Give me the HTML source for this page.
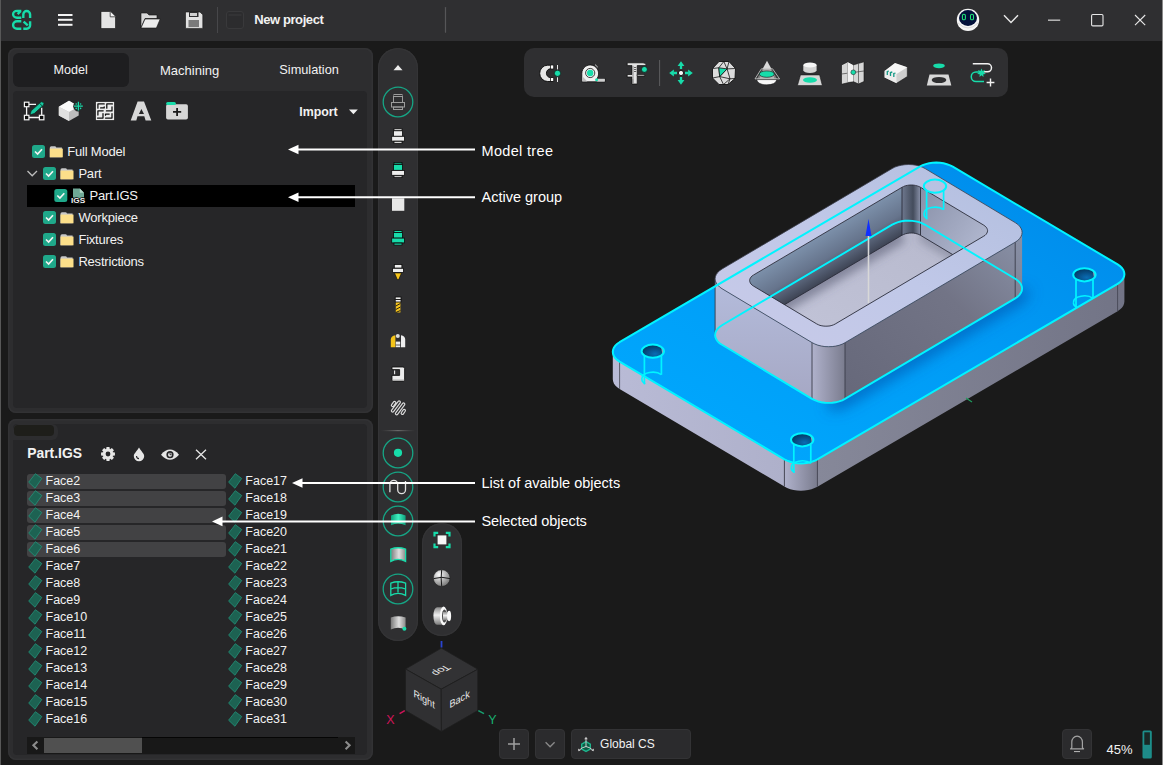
<!DOCTYPE html>
<html><head><meta charset="utf-8"><style>
*{margin:0;padding:0;box-sizing:border-box}
html,body{width:1163px;height:765px;overflow:hidden;background:#1a1a1a;font-family:"Liberation Sans", sans-serif;color:#f2f2f2}
.a{position:absolute}
.t{position:absolute;white-space:nowrap;line-height:1}
</style></head><body>

<div class="a" style="left:0;top:0;width:1163px;height:41px;background:#2f2f31"></div>
<div class="a" style="left:0;top:0;width:1px;height:765px;background:#585858"></div>
<div class="a" style="left:1162px;top:0;width:1px;height:765px;background:#8a8a8a"></div>
<div class="a" style="left:8px;top:48px;width:364.5px;height:365px;background:#2d2d2f;border-radius:8px;box-shadow:inset 0 0 0 1.5px #323234"></div>
<div class="a" style="left:13px;top:53px;width:116px;height:34px;background:#1e1e20;border-radius:6px"></div>
<div class="a" style="left:13px;top:91px;width:354px;height:317px;background:#262628;border-radius:4px"></div>
<div class="a" style="left:8px;top:419px;width:364.5px;height:341px;background:#2d2d2f;border-radius:8px;box-shadow:inset 0 0 0 1.5px #323234"></div>
<div class="a" style="left:13px;top:424px;width:354px;height:331px;background:#262628;border-radius:4px"></div>
<div class="a" style="left:13px;top:424px;width:45px;height:16px;background:#2d2d2f;border-radius:6px 6px 6px 0"></div>
<div class="a" style="left:14px;top:425px;width:40px;height:11px;background:#1e1e1a;border-radius:4px"></div>
<div class="a" style="left:377.5px;top:47.5px;width:40.5px;height:593px;background:#2f2f31;border-radius:20px;box-shadow:inset 0 0 0 1.2px #343436"></div>
<div class="a" style="left:422px;top:523px;width:39.5px;height:112.5px;background:#2f2f31;border-radius:20px;box-shadow:inset 0 0 0 1.2px #343436"></div>
<div class="a" style="left:524px;top:48px;width:484px;height:49px;background:#2f2f31;border-radius:10px"></div>
<div class="a" style="left:499px;top:729px;width:30px;height:30px;background:#2b2b2d;border:1px solid #333335;border-radius:4px"></div>
<div class="a" style="left:535px;top:729px;width:30px;height:30px;background:#2b2b2d;border:1px solid #333335;border-radius:4px"></div>
<div class="a" style="left:571px;top:729px;width:120px;height:30px;background:#2b2b2d;border:1px solid #333335;border-radius:4px"></div>
<div class="a" style="left:1062px;top:729px;width:30px;height:30px;background:#2b2b2d;border:1px solid #333335;border-radius:4px"></div>
<div class="a" style="left:27px;top:185px;width:328px;height:22px;background:#000"></div>
<div class="a" style="left:27px;top:474px;width:199px;height:15px;background:#424244;border-radius:3px"></div>
<div class="a" style="left:27px;top:491px;width:199px;height:15px;background:#424244;border-radius:3px"></div>
<div class="a" style="left:27px;top:508px;width:199px;height:15px;background:#424244;border-radius:3px"></div>
<div class="a" style="left:27px;top:525px;width:199px;height:15px;background:#424244;border-radius:3px"></div>
<div class="a" style="left:27px;top:542px;width:199px;height:15px;background:#424244;border-radius:3px"></div>
<div class="a" style="left:27px;top:737px;width:328px;height:17px;background:#181818"></div>
<div class="a" style="left:44px;top:738px;width:98px;height:14.5px;background:#505050"></div>
<svg class="a" style="left:0;top:0" width="1163" height="765" viewBox="0 0 1163 765">
<defs>
<linearGradient id="gTop" x1="0" y1="1" x2="1" y2="0">
<stop offset="0" stop-color="#00aaff"/><stop offset="0.5" stop-color="#009cf6"/><stop offset="1" stop-color="#0088e8"/></linearGradient>
<linearGradient id="gSideL" x1="0" y1="0" x2="1" y2="0">
<stop offset="0" stop-color="#b9bbd6"/><stop offset="1" stop-color="#aeb0ca"/></linearGradient>
<linearGradient id="gSideR" x1="0" y1="0" x2="1" y2="0">
<stop offset="0" stop-color="#868899"/><stop offset="1" stop-color="#727486"/></linearGradient>
<linearGradient id="gCorner" x1="0" y1="0" x2="1" y2="0">
<stop offset="0" stop-color="#b0b2cc"/><stop offset="1" stop-color="#7a7c8e"/></linearGradient>
<linearGradient id="gBossTop" x1="0" y1="1" x2="1" y2="0">
<stop offset="0" stop-color="#c8cae8"/><stop offset="0.5" stop-color="#c0c8e8"/><stop offset="1" stop-color="#b2bede"/></linearGradient>
<linearGradient id="gBossL" x1="0" y1="0" x2="0" y2="1">
<stop offset="0" stop-color="#b4bcdc"/><stop offset="1" stop-color="#a6a8c4"/></linearGradient>
<linearGradient id="gBossR" x1="0" y1="1" x2="1" y2="0">
<stop offset="0" stop-color="#66687a"/><stop offset="0.6" stop-color="#727486"/><stop offset="1" stop-color="#8a92a8"/></linearGradient>
<linearGradient id="gWallL" x1="0" y1="1" x2="1" y2="0">
<stop offset="0" stop-color="#5c6478"/><stop offset="1" stop-color="#7a8aa4"/></linearGradient>
<linearGradient id="gWallR" x1="0" y1="0" x2="1" y2="1">
<stop offset="0" stop-color="#8890a8"/><stop offset="1" stop-color="#bcc2da"/></linearGradient>
<linearGradient id="gFillet" x1="0" y1="0" x2="1" y2="0">
<stop offset="0" stop-color="#6e788e"/><stop offset="0.6" stop-color="#444c5c"/><stop offset="1" stop-color="#8a92aa"/></linearGradient>
<linearGradient id="gFloor" x1="0" y1="1" x2="1" y2="0">
<stop offset="0" stop-color="#c2c4d8"/><stop offset="1" stop-color="#b4b6ca"/></linearGradient>
<radialGradient id="gHole" cx="0.6" cy="0.7" r="0.8">
<stop offset="0" stop-color="#0a6cb4"/><stop offset="1" stop-color="#022c50"/></radialGradient>
<linearGradient id="gShadow" x1="0" y1="0" x2="1" y2="0">
<stop offset="0" stop-color="#0066c0" stop-opacity="0.55"/><stop offset="1" stop-color="#0066c0" stop-opacity="0"/></linearGradient>
</defs>
<path d="M612.8,351.8 L613.1,354.0 L613.9,356.1 L615.3,358.1 L617.2,359.9 L619.6,361.6 L784.4,459.3 L784.4,486.6 L619.6,388.9 L617.2,387.3 L615.3,385.4 L613.9,383.4 L613.1,381.3 L612.8,379.2Z" fill="url(#gSideL)"/>
<path d="M784.4,459.3 L787.1,460.7 L790.3,461.8 L793.6,462.7 L797.2,463.2 L800.9,463.4 L804.5,463.2 L808.1,462.7 L811.5,461.9 L814.6,460.8 L817.4,459.4 L817.4,486.8 L814.6,488.1 L811.5,489.3 L808.1,490.1 L804.5,490.6 L800.9,490.7 L797.2,490.5 L793.6,490.0 L790.3,489.2 L787.1,488.1 L784.4,486.6Z" fill="url(#gCorner)"/>
<path d="M817.4,459.4 L1117.6,283.8 L1119.9,282.2 L1121.9,280.4 L1123.3,278.4 L1124.1,276.3 L1124.4,274.2 L1124.4,301.5 L1124.1,303.6 L1123.3,305.7 L1121.9,307.7 L1119.9,309.6 L1117.6,311.2 L817.4,486.8Z" fill="url(#gSideR)"/>
<line x1="784.4" y1="459.3" x2="784.4" y2="486.6" stroke="#4a4c5a" stroke-width="1"/>
<line x1="817.4" y1="459.4" x2="817.4" y2="486.8" stroke="#4a4c5a" stroke-width="1"/>
<line x1="619.6" y1="361.6" x2="619.6" y2="388.9" stroke="#5a5c6a" stroke-width="1"/>
<line x1="1117.6" y1="283.8" x2="1117.6" y2="311.2" stroke="#4a4c5a" stroke-width="1"/>
<path d="M619.6,342.2 L617.3,343.8 L615.3,345.6 L613.9,347.6 L613.1,349.7 L612.8,351.8 L613.1,354.0 L613.9,356.1 L615.3,358.1 L617.2,359.9 L619.6,361.6 L784.4,459.3 L787.1,460.7 L790.3,461.8 L793.6,462.7 L797.2,463.2 L800.9,463.4 L804.5,463.2 L808.1,462.7 L811.5,461.9 L814.6,460.8 L817.4,459.4 L1117.6,283.8 L1119.9,282.2 L1121.9,280.4 L1123.3,278.4 L1124.1,276.3 L1124.4,274.2 L1124.1,272.0 L1123.3,269.9 L1121.9,267.9 L1120.0,266.1 L1117.6,264.4 L952.8,166.7 L950.1,165.3 L946.9,164.2 L943.6,163.3 L940.0,162.8 L936.3,162.6 L932.7,162.8 L929.1,163.3 L925.7,164.1 L922.6,165.2 L919.8,166.6Z" fill="url(#gTop)"/>
<filter id="fBlur" x="-20%" y="-20%" width="140%" height="140%"><feGaussianBlur stdDeviation="7"/></filter>
<clipPath id="cPlate"><path d="M619.6,342.2 L617.3,343.8 L615.3,345.6 L613.9,347.6 L613.1,349.7 L612.8,351.8 L613.1,354.0 L613.9,356.1 L615.3,358.1 L617.2,359.9 L619.6,361.6 L784.4,459.3 L787.1,460.7 L790.3,461.8 L793.6,462.7 L797.2,463.2 L800.9,463.4 L804.5,463.2 L808.1,462.7 L811.5,461.9 L814.6,460.8 L817.4,459.4 L1117.6,283.8 L1119.9,282.2 L1121.9,280.4 L1123.3,278.4 L1124.1,276.3 L1124.4,274.2 L1124.1,272.0 L1123.3,269.9 L1121.9,267.9 L1120.0,266.1 L1117.6,264.4 L952.8,166.7 L950.1,165.3 L946.9,164.2 L943.6,163.3 L940.0,162.8 L936.3,162.6 L932.7,162.8 L929.1,163.3 L925.7,164.1 L922.6,165.2 L919.8,166.6Z"/></clipPath>
<g clip-path="url(#cPlate)"><path d="M828.5,402.9 L832.2,402.8 L835.7,402.3 L839.1,401.4 L842.3,400.3 L845.0,398.9 L1015.2,298.4 L1017.6,296.7 L1019.5,294.9 L1020.9,292.9 L1021.8,290.8 L1022.1,288.6" fill="none" stroke="#0050a8" stroke-width="16" stroke-opacity="0.6" filter="url(#fBlur)"/></g>
<path d="M715.1,278.8 L715.4,281.0 L716.3,283.1 L717.7,285.1 L719.6,287.0 L722.0,288.7 L812.0,342.6 L812.0,398.8 L722.0,344.8 L719.6,343.2 L717.7,341.3 L716.3,339.3 L715.4,337.2 L715.1,335.0Z" fill="url(#gBossL)"/>
<path d="M812.0,342.6 L814.8,344.0 L817.9,345.2 L821.3,346.0 L824.9,346.6 L828.5,346.7 L832.2,346.6 L835.7,346.1 L839.1,345.3 L842.3,344.1 L845.0,342.7 L845.0,398.9 L842.3,400.3 L839.1,401.4 L835.7,402.3 L832.2,402.8 L828.5,402.9 L824.9,402.7 L821.3,402.2 L817.9,401.4 L814.8,400.2 L812.0,398.8Z" fill="url(#gCorner)"/>
<path d="M845.0,342.7 L1015.2,242.2 L1017.6,240.6 L1019.5,238.7 L1020.9,236.7 L1021.8,234.6 L1022.1,232.4 L1022.1,288.6 L1021.8,290.8 L1020.9,292.9 L1019.5,294.9 L1017.6,296.7 L1015.2,298.4 L845.0,398.9Z" fill="url(#gBossR)"/>
<line x1="715.1" y1="278.8" x2="715.1" y2="335.0" stroke="#3a3c4a" stroke-width="0.9"/>
<line x1="812.0" y1="342.6" x2="812.0" y2="398.8" stroke="#3a3c4a" stroke-width="0.9"/>
<line x1="845.0" y1="342.7" x2="845.0" y2="398.9" stroke="#3a3c4a" stroke-width="0.9"/>
<line x1="1015.2" y1="242.2" x2="1015.2" y2="298.4" stroke="#3a3c4a" stroke-width="0.9"/>
<path d="M722.0,269.0 L719.6,270.7 L717.7,272.5 L716.3,274.5 L715.4,276.7 L715.1,278.8 L715.4,281.0 L716.3,283.1 L717.7,285.1 L719.6,287.0 L722.0,288.7 L812.0,342.6 L814.8,344.0 L817.9,345.2 L821.3,346.0 L824.9,346.6 L828.5,346.7 L832.2,346.6 L835.7,346.1 L839.1,345.3 L842.3,344.1 L845.0,342.7 L1015.2,242.2 L1017.6,240.6 L1019.5,238.7 L1020.9,236.7 L1021.8,234.6 L1022.1,232.4 L1021.8,230.2 L1020.9,228.1 L1019.5,226.1 L1017.6,224.2 L1015.2,222.6 L925.2,168.6 L922.4,167.2 L919.3,166.0 L915.9,165.2 L912.3,164.7 L908.7,164.5 L905.0,164.7 L901.5,165.2 L898.1,166.0 L894.9,167.1 L892.2,168.5Z" fill="url(#gBossTop)" stroke="#3a3c4a" stroke-width="0.8"/>
<filter id="fBlur2" x="-20%" y="-20%" width="140%" height="140%"><feGaussianBlur stdDeviation="5"/></filter>
<clipPath id="cPocket"><path d="M753.5,275.0 L752.1,275.9 L751.1,277.0 L750.3,278.1 L749.8,279.3 L749.6,280.5 L749.8,281.7 L750.3,282.9 L751.0,284.0 L752.1,285.1 L753.4,286.0 L816.7,323.9 L818.3,324.7 L820.0,325.4 L821.9,325.8 L823.9,326.1 L825.9,326.2 L828.0,326.1 L830.0,325.9 L831.9,325.4 L833.6,324.8 L835.2,324.0 L983.7,236.2 L985.1,235.3 L986.1,234.3 L986.9,233.1 L987.4,231.9 L987.6,230.7 L987.4,229.5 L986.9,228.3 L986.2,227.2 L985.1,226.2 L983.8,225.2 L920.5,187.3 L918.9,186.5 L917.2,185.9 L915.3,185.4 L913.3,185.1 L911.3,185.0 L909.2,185.1 L907.2,185.4 L905.3,185.8 L903.6,186.5 L902.0,187.3Z"/></clipPath>
<g clip-path="url(#cPocket)">
<path d="M753.5,275.0 L752.1,275.9 L751.1,277.0 L750.3,278.1 L749.8,279.3 L749.6,280.5 L749.8,281.7 L750.3,282.9 L751.0,284.0 L752.1,285.1 L753.4,286.0 L816.7,323.9 L818.3,324.7 L820.0,325.4 L821.9,325.8 L823.9,326.1 L825.9,326.2 L828.0,326.1 L830.0,325.9 L831.9,325.4 L833.6,324.8 L835.2,324.0 L983.7,236.2 L985.1,235.3 L986.1,234.3 L986.9,233.1 L987.4,231.9 L987.6,230.7 L987.4,229.5 L986.9,228.3 L986.2,227.2 L985.1,226.2 L983.8,225.2 L920.5,187.3 L918.9,186.5 L917.2,185.9 L915.3,185.4 L913.3,185.1 L911.3,185.0 L909.2,185.1 L907.2,185.4 L905.3,185.8 L903.6,186.5 L902.0,187.3Z" fill="url(#gFloor)"/>
<path d="M902.0,235.2 L753.5,323.0 L752.1,323.9 L751.1,325.0 L750.3,326.1 L749.8,327.3 L749.6,328.5" fill="none" stroke="#50546a" stroke-width="14" stroke-opacity="0.55" filter="url(#fBlur2)"/>
<path d="M987.6,278.7 L987.4,277.5 L986.9,276.3 L986.2,275.2 L985.1,274.1 L983.8,273.2 L920.5,235.3" fill="none" stroke="#50546a" stroke-width="10" stroke-opacity="0.4" filter="url(#fBlur2)"/>
<linearGradient id="gWallL2" gradientUnits="userSpaceOnUse" x1="827.7" y1="231.1" x2="848.7" y2="266.7"><stop offset="0" stop-color="#7c90aa"/><stop offset="0.55" stop-color="#66748c"/><stop offset="1" stop-color="#3e4454"/></linearGradient>
<path d="M987.6,230.7 L987.4,229.5 L986.9,228.3 L986.2,227.2 L985.1,226.2 L983.8,225.2 L920.5,187.3 L920.5,235.3 L983.8,273.2 L985.1,274.1 L986.2,275.2 L986.9,276.3 L987.4,277.5 L987.6,278.7Z" fill="url(#gWallR)"/>
<path d="M920.5,187.3 L918.9,186.5 L917.2,185.9 L915.3,185.4 L913.3,185.1 L911.3,185.0 L909.2,185.1 L907.2,185.4 L905.3,185.8 L903.6,186.5 L902.0,187.3 L902.0,235.2 L903.6,234.5 L905.3,233.8 L907.2,233.4 L909.2,233.1 L911.3,233.0 L913.3,233.1 L915.3,233.4 L917.2,233.9 L918.9,234.5 L920.5,235.3Z" fill="url(#gFillet)"/>
<path d="M902.0,187.3 L753.5,275.0 L752.1,275.9 L751.1,277.0 L750.3,278.1 L749.8,279.3 L749.6,280.5 L749.6,328.5 L749.8,327.3 L750.3,326.1 L751.1,325.0 L752.1,323.9 L753.5,323.0 L902.0,235.2Z" fill="url(#gWallL2)"/>
<line x1="920.5" y1="187.3" x2="920.5" y2="235.3" stroke="#2a2c3a" stroke-width="0.9"/>
<line x1="902.0" y1="187.3" x2="902.0" y2="235.2" stroke="#2a2c3a" stroke-width="0.9"/>
<path d="M987.6,278.7 L987.4,277.5 L986.9,276.3 L986.2,275.2 L985.1,274.1 L983.8,273.2 L920.5,235.3 L918.9,234.5 L917.2,233.9 L915.3,233.4 L913.3,233.1 L911.3,233.0 L909.2,233.1 L907.2,233.4 L905.3,233.8 L903.6,234.5 L902.0,235.2 L753.5,323.0 L752.1,323.9 L751.1,325.0 L750.3,326.1 L749.8,327.3 L749.6,328.5" fill="none" stroke="#2a2c3a" stroke-width="0.9"/>
</g>
<path d="M753.5,275.0 L752.1,275.9 L751.1,277.0 L750.3,278.1 L749.8,279.3 L749.6,280.5 L749.8,281.7 L750.3,282.9 L751.0,284.0 L752.1,285.1 L753.4,286.0 L816.7,323.9 L818.3,324.7 L820.0,325.4 L821.9,325.8 L823.9,326.1 L825.9,326.2 L828.0,326.1 L830.0,325.9 L831.9,325.4 L833.6,324.8 L835.2,324.0 L983.7,236.2 L985.1,235.3 L986.1,234.3 L986.9,233.1 L987.4,231.9 L987.6,230.7 L987.4,229.5 L986.9,228.3 L986.2,227.2 L985.1,226.2 L983.8,225.2 L920.5,187.3 L918.9,186.5 L917.2,185.9 L915.3,185.4 L913.3,185.1 L911.3,185.0 L909.2,185.1 L907.2,185.4 L905.3,185.8 L903.6,186.5 L902.0,187.3Z" fill="none" stroke="#2a2c3a" stroke-width="0.9"/>
<path d="M661.0,356.0 L662.8,354.6 L664.0,353.0 L664.4,351.2 L664.0,349.5 L662.8,347.8 L661.0,346.4 L658.6,345.3 L655.8,344.7 L652.9,344.4 L649.9,344.6 L647.1,345.3 L644.7,346.4 L642.9,347.8 L641.7,349.4 L641.3,351.2 L641.7,352.9 L642.9,354.6 L644.7,356.0 L647.1,357.1 L649.8,357.7 L652.8,358.0 L655.8,357.8 L658.6,357.1 L661.0,356.0Z" fill="url(#gHole)"/>
<path d="M661.1,346.7 A11.4,6.6 0 0 1 662.4,354.4 Z" fill="#9aa0b4"/>
<path d="M810.4,444.6 L812.2,443.2 L813.4,441.6 L813.8,439.8 L813.4,438.1 L812.2,436.4 L810.4,435.0 L808.0,433.9 L805.2,433.3 L802.3,433.0 L799.3,433.2 L796.5,433.9 L794.1,435.0 L792.3,436.4 L791.1,438.0 L790.7,439.8 L791.1,441.5 L792.3,443.2 L794.1,444.6 L796.5,445.6 L799.2,446.3 L802.2,446.6 L805.2,446.4 L808.0,445.7 L810.4,444.6Z" fill="url(#gHole)"/>
<path d="M810.5,435.3 A11.4,6.6 0 0 1 811.8,443.0 Z" fill="#9aa0b4"/>
<path d="M1092.5,279.6 L1094.3,278.2 L1095.5,276.6 L1095.9,274.8 L1095.5,273.1 L1094.3,271.4 L1092.5,270.0 L1090.1,268.9 L1087.4,268.3 L1084.4,268.0 L1081.4,268.2 L1078.6,268.9 L1076.2,270.0 L1074.4,271.4 L1073.2,273.0 L1072.8,274.8 L1073.2,276.5 L1074.4,278.2 L1076.2,279.6 L1078.6,280.7 L1081.4,281.3 L1084.3,281.6 L1087.3,281.4 L1090.1,280.7 L1092.5,279.6Z" fill="url(#gHole)"/>
<path d="M1092.7,270.3 A11.4,6.6 0 0 1 1094.0,278.0 Z" fill="#9aa0b4"/>
<path d="M619.6,342.2 L617.3,343.8 L615.3,345.6 L613.9,347.6 L613.1,349.7 L612.8,351.8 L613.1,354.0 L613.9,356.1 L615.3,358.1 L617.2,359.9 L619.6,361.6 L784.4,459.3 L787.1,460.7 L790.3,461.8 L793.6,462.7 L797.2,463.2 L800.9,463.4 L804.5,463.2 L808.1,462.7 L811.5,461.9 L814.6,460.8 L817.4,459.4 L1117.6,283.8 L1119.9,282.2 L1121.9,280.4 L1123.3,278.4 L1124.1,276.3 L1124.4,274.2 L1124.1,272.0 L1123.3,269.9 L1121.9,267.9 L1120.0,266.1 L1117.6,264.4 L952.8,166.7 L950.1,165.3 L946.9,164.2 L943.6,163.3 L940.0,162.8 L936.3,162.6 L932.7,162.8 L929.1,163.3 L925.7,164.1 L922.6,165.2 L919.8,166.6Z" fill="none" stroke="#00f4ff" stroke-width="2"/>
<path d="M722.0,325.2 L719.6,326.9 L717.7,328.7 L716.3,330.7 L715.4,332.8 L715.1,335.0 L715.4,337.2 L716.3,339.3 L717.7,341.3 L719.6,343.2 L722.0,344.8 L812.0,398.8 L814.8,400.2 L817.9,401.4 L821.3,402.2 L824.9,402.7 L828.5,402.9 L832.2,402.8 L835.7,402.3 L839.1,401.4 L842.3,400.3 L845.0,398.9 L1015.2,298.4 L1017.6,296.7 L1019.5,294.9 L1020.9,292.9 L1021.8,290.8 L1022.1,288.6 L1021.8,286.4 L1020.9,284.3 L1019.5,282.3 L1017.6,280.4 L1015.2,278.8 L925.2,224.8 L922.4,223.4 L919.3,222.2 L915.9,221.4 L912.3,220.9 L908.7,220.7 L905.0,220.8 L901.5,221.3 L898.1,222.2 L894.9,223.3 L892.2,224.7Z" fill="none" stroke="#00f4ff" stroke-width="1.9"/>
<ellipse cx="652.8" cy="351.2" rx="11.2" ry="6.6" fill="none" stroke="#00f4ff" stroke-width="2"/>
<path d="M644.4,355.8 V384.2 M661.4,355.8 V374.7" stroke="#00f4ff" stroke-width="1.7" fill="none"/>
<path d="M642.0,378.5 A10.8,6.2 0 0 1 661.4,374.7 M642.0,378.5 A10.8,6.2 0 0 0 645.2,383.8" stroke="#00f4ff" stroke-width="1.6" fill="none"/>
<ellipse cx="802.2" cy="439.8" rx="11.2" ry="6.6" fill="none" stroke="#00f4ff" stroke-width="2"/>
<path d="M793.8,444.4 V472.8 M810.8,444.4 V463.3" stroke="#00f4ff" stroke-width="1.7" fill="none"/>
<path d="M791.4,467.1 A10.8,6.2 0 0 1 810.8,463.3 M791.4,467.1 A10.8,6.2 0 0 0 794.6,472.4" stroke="#00f4ff" stroke-width="1.6" fill="none"/>
<ellipse cx="1084.4" cy="274.8" rx="11.2" ry="6.6" fill="none" stroke="#00f4ff" stroke-width="2"/>
<path d="M1076.0,279.4 V307.8 M1093.0,279.4 V298.3" stroke="#00f4ff" stroke-width="1.7" fill="none"/>
<path d="M1073.6,302.1 A10.8,6.2 0 0 1 1093.0,298.3 M1073.6,302.1 A10.8,6.2 0 0 0 1076.8,307.4" stroke="#00f4ff" stroke-width="1.6" fill="none"/>
<ellipse cx="935.0" cy="186.2" rx="11.2" ry="6.6" fill="none" stroke="#00f4ff" stroke-width="2"/>
<path d="M926.6,190.8 V219.2 M943.6,190.8 V209.7" stroke="#00f4ff" stroke-width="1.7" fill="none"/>
<path d="M924.2,213.5 A10.8,6.2 0 0 1 943.6,209.7 M924.2,213.5 A10.8,6.2 0 0 0 927.4,218.8" stroke="#00f4ff" stroke-width="1.6" fill="none"/>
<line x1="868.5" y1="236" x2="868.5" y2="303" stroke="#d8d8d8" stroke-width="1.6"/>
<path d="M868.5,219 L871.5,236 L865.5,236 Z" fill="#1030ff"/>
<line x1="966" y1="398" x2="972" y2="402" stroke="#20a060" stroke-width="1.2"/>
</svg>
<div class="t" style="left:254.3px;top:13.20px;font-size:13px;font-weight:700;color:#f2f2f2;letter-spacing:-0.42px;">New project</div>
<div class="t" style="left:53.6px;top:64.03px;font-size:12.6px;font-weight:400;color:#f2f2f2;letter-spacing:0px;">Model</div>
<div class="t" style="left:160px;top:63.50px;font-size:13px;font-weight:400;color:#f2f2f2;letter-spacing:0px;">Machining</div>
<div class="t" style="left:279.3px;top:63.91px;font-size:12.75px;font-weight:400;color:#f2f2f2;letter-spacing:0px;">Simulation</div>
<div class="t" style="left:299.2px;top:106.10px;font-size:12.4px;font-weight:700;color:#f2f2f2;letter-spacing:0px;">Import</div>
<div class="t" style="left:67.2px;top:145.00px;font-size:13px;font-weight:400;color:#f2f2f2;letter-spacing:-0.2px;">Full Model</div>
<div class="t" style="left:78.4px;top:167.00px;font-size:13px;font-weight:400;color:#f2f2f2;letter-spacing:-0.2px;">Part</div>
<div class="t" style="left:89.6px;top:189.00px;font-size:13px;font-weight:400;color:#f2f2f2;letter-spacing:-0.2px;">Part.IGS</div>
<div class="t" style="left:78.4px;top:211.00px;font-size:13px;font-weight:400;color:#f2f2f2;letter-spacing:-0.2px;">Workpiece</div>
<div class="t" style="left:78.4px;top:233.00px;font-size:13px;font-weight:400;color:#f2f2f2;letter-spacing:-0.2px;">Fixtures</div>
<div class="t" style="left:78.4px;top:255.00px;font-size:13px;font-weight:400;color:#f2f2f2;letter-spacing:-0.2px;">Restrictions</div>
<div class="t" style="left:27.2px;top:447.23px;font-size:13.9px;font-weight:700;color:#f2f2f2;letter-spacing:0px;">Part.IGS</div>
<div class="t" style="left:45.5px;top:474.72px;font-size:12.5px;font-weight:400;color:#f2f2f2;letter-spacing:0px;">Face2</div>
<div class="t" style="left:245.3px;top:474.72px;font-size:12.5px;font-weight:400;color:#f2f2f2;letter-spacing:0px;">Face17</div>
<div class="t" style="left:45.5px;top:491.72px;font-size:12.5px;font-weight:400;color:#f2f2f2;letter-spacing:0px;">Face3</div>
<div class="t" style="left:245.3px;top:491.72px;font-size:12.5px;font-weight:400;color:#f2f2f2;letter-spacing:0px;">Face18</div>
<div class="t" style="left:45.5px;top:508.72px;font-size:12.5px;font-weight:400;color:#f2f2f2;letter-spacing:0px;">Face4</div>
<div class="t" style="left:245.3px;top:508.72px;font-size:12.5px;font-weight:400;color:#f2f2f2;letter-spacing:0px;">Face19</div>
<div class="t" style="left:45.5px;top:525.72px;font-size:12.5px;font-weight:400;color:#f2f2f2;letter-spacing:0px;">Face5</div>
<div class="t" style="left:245.3px;top:525.72px;font-size:12.5px;font-weight:400;color:#f2f2f2;letter-spacing:0px;">Face20</div>
<div class="t" style="left:45.5px;top:542.72px;font-size:12.5px;font-weight:400;color:#f2f2f2;letter-spacing:0px;">Face6</div>
<div class="t" style="left:245.3px;top:542.72px;font-size:12.5px;font-weight:400;color:#f2f2f2;letter-spacing:0px;">Face21</div>
<div class="t" style="left:45.5px;top:559.72px;font-size:12.5px;font-weight:400;color:#f2f2f2;letter-spacing:0px;">Face7</div>
<div class="t" style="left:245.3px;top:559.72px;font-size:12.5px;font-weight:400;color:#f2f2f2;letter-spacing:0px;">Face22</div>
<div class="t" style="left:45.5px;top:576.72px;font-size:12.5px;font-weight:400;color:#f2f2f2;letter-spacing:0px;">Face8</div>
<div class="t" style="left:245.3px;top:576.72px;font-size:12.5px;font-weight:400;color:#f2f2f2;letter-spacing:0px;">Face23</div>
<div class="t" style="left:45.5px;top:593.72px;font-size:12.5px;font-weight:400;color:#f2f2f2;letter-spacing:0px;">Face9</div>
<div class="t" style="left:245.3px;top:593.72px;font-size:12.5px;font-weight:400;color:#f2f2f2;letter-spacing:0px;">Face24</div>
<div class="t" style="left:45.5px;top:610.72px;font-size:12.5px;font-weight:400;color:#f2f2f2;letter-spacing:0px;">Face10</div>
<div class="t" style="left:245.3px;top:610.72px;font-size:12.5px;font-weight:400;color:#f2f2f2;letter-spacing:0px;">Face25</div>
<div class="t" style="left:45.5px;top:627.72px;font-size:12.5px;font-weight:400;color:#f2f2f2;letter-spacing:0px;">Face11</div>
<div class="t" style="left:245.3px;top:627.72px;font-size:12.5px;font-weight:400;color:#f2f2f2;letter-spacing:0px;">Face26</div>
<div class="t" style="left:45.5px;top:644.72px;font-size:12.5px;font-weight:400;color:#f2f2f2;letter-spacing:0px;">Face12</div>
<div class="t" style="left:245.3px;top:644.72px;font-size:12.5px;font-weight:400;color:#f2f2f2;letter-spacing:0px;">Face27</div>
<div class="t" style="left:45.5px;top:661.72px;font-size:12.5px;font-weight:400;color:#f2f2f2;letter-spacing:0px;">Face13</div>
<div class="t" style="left:245.3px;top:661.72px;font-size:12.5px;font-weight:400;color:#f2f2f2;letter-spacing:0px;">Face28</div>
<div class="t" style="left:45.5px;top:678.72px;font-size:12.5px;font-weight:400;color:#f2f2f2;letter-spacing:0px;">Face14</div>
<div class="t" style="left:245.3px;top:678.72px;font-size:12.5px;font-weight:400;color:#f2f2f2;letter-spacing:0px;">Face29</div>
<div class="t" style="left:45.5px;top:695.72px;font-size:12.5px;font-weight:400;color:#f2f2f2;letter-spacing:0px;">Face15</div>
<div class="t" style="left:245.3px;top:695.72px;font-size:12.5px;font-weight:400;color:#f2f2f2;letter-spacing:0px;">Face30</div>
<div class="t" style="left:45.5px;top:712.72px;font-size:12.5px;font-weight:400;color:#f2f2f2;letter-spacing:0px;">Face16</div>
<div class="t" style="left:245.3px;top:712.72px;font-size:12.5px;font-weight:400;color:#f2f2f2;letter-spacing:0px;">Face31</div>
<div class="t" style="left:600.1px;top:737.84px;font-size:12px;font-weight:400;color:#f2f2f2;letter-spacing:0px;">Global CS</div>
<div class="t" style="left:1106.6px;top:743.00px;font-size:13px;font-weight:400;color:#f2f2f2;letter-spacing:0px;">45%</div>
<div class="t" style="left:481.5px;top:143.93px;font-size:14.5px;font-weight:400;color:#ffffff;letter-spacing:0.33px;">Model tree</div>
<div class="t" style="left:481.5px;top:189.53px;font-size:14.5px;font-weight:400;color:#ffffff;letter-spacing:0px;">Active group</div>
<div class="t" style="left:481.5px;top:476.13px;font-size:14.5px;font-weight:400;color:#ffffff;letter-spacing:0px;">List of avaible objects</div>
<div class="t" style="left:481.5px;top:514.33px;font-size:14.5px;font-weight:400;color:#ffffff;letter-spacing:-0.07px;">Selected objects</div>
<svg class="a" style="left:0;top:0" width="1163" height="765" viewBox="0 0 1163 765">
<defs>
<linearGradient id="gGrayH" x1="0" y1="0" x2="1" y2="0"><stop offset="0" stop-color="#7a7a7a"/><stop offset="0.55" stop-color="#e0e0e0"/><stop offset="1" stop-color="#8a8a8a"/></linearGradient>
<linearGradient id="gTealH" x1="0" y1="0" x2="1" y2="0"><stop offset="0" stop-color="#0fa07c"/><stop offset="0.5" stop-color="#3ff0c0"/><stop offset="1" stop-color="#0fa07c"/></linearGradient>
<radialGradient id="gSphere" cx="0.35" cy="0.3" r="0.8"><stop offset="0" stop-color="#ffffff"/><stop offset="1" stop-color="#6a6a6a"/></radialGradient>
</defs>
<g fill="none" stroke="#17dcaa" stroke-width="2.4" transform="translate(0,-0.3)"><path d="M21.3,11.2 H17 A3.9,3.4 0 0 0 17,18 H21.3"/><path d="M20.6,11.4 L17.6,14.4"/><path d="M23.3,18.3 V14.8 A3.4,3.5 0 0 1 30.1,14.8 V18.3"/><path d="M21.3,21.6 H17 A3.9,3.7 0 0 0 17,29 H21.3"/><path d="M30.1,21.5 V25.5 A3.4,3.5 0 0 1 26.7,29 H23.3"/><path d="M23.6,21.9 L27.8,25.6"/></g>
<g fill="#f4f4f4"><rect x="58" y="14" width="14.5" height="2"/><rect x="58" y="18.8" width="14.5" height="2"/><rect x="58" y="23.8" width="14.5" height="2"/></g>
<path d="M101,11.5 H110.2 L115.5,16.8 V28.5 H101 Z" fill="#e4e4e4" stroke="#111" stroke-width="0.6"/>
<path d="M110.2,11.5 V16.8 H115.5" fill="#f4f4f4" stroke="#333" stroke-width="0.8"/>
<path d="M141,13 H147 L149,15 H157 V18.5 H145 L141,27.8 Z" fill="#d8d8d8" stroke="#111" stroke-width="0.6"/>
<path d="M145,19 H160.2 L156.4,28 H141 Z" fill="#ececec" stroke="#111" stroke-width="0.6"/>
<path d="M185.5,12 H200 L202.8,14.8 V28.4 H185.5 Z" fill="#e2e2e2" stroke="#111" stroke-width="0.6"/>
<rect x="189" y="12" width="9.5" height="5" fill="#2f2f31"/>
<rect x="190" y="13" width="7" height="3" fill="#d0d0d0"/>
<rect x="188.5" y="20" width="10.5" height="7" fill="#7a7a7a"/>
<rect x="217" y="7" width="1" height="26" fill="#47474a"/>
<rect x="444.9" y="7" width="1.2" height="25.8" rx="0.6" fill="#565658"/>
<rect x="226.5" y="11.5" width="17" height="17" rx="2.5" fill="#2c2c2e" stroke="#39393b" stroke-width="1"/>
<rect x="228.5" y="14.5" width="13" height="1" fill="#3a3a3c"/>
<circle cx="968" cy="19.9" r="11.2" fill="#f6f6f6"/>
<path d="M958,23 Q968,33 978,23" fill="none" stroke="#dadada" stroke-width="1"/>
<ellipse cx="968" cy="18" rx="9" ry="7.9" fill="#03113a"/>
<g fill="none" stroke="#22e47a" stroke-width="1.1"><rect x="962.4" y="14.3" width="3" height="5.5" rx="1.4"/><rect x="970.5" y="14.3" width="3" height="5.5" rx="1.4"/></g>
<path d="M1004,15.3 L1011,22.6 L1018,15.3" fill="none" stroke="#e8e8e8" stroke-width="1.4"/>
<rect x="1048" y="19.6" width="12.2" height="1.1" fill="#e8e8e8"/>
<rect x="1091.6" y="14.5" width="11.4" height="11.4" rx="1.2" fill="none" stroke="#e8e8e8" stroke-width="1.1"/>
<path d="M1135,15 L1145.2,25.2 M1145.2,15 L1135,25.2" stroke="#e8e8e8" stroke-width="1.1"/>
<path d="M29,104.4 H36 M26.6,106.8 V115.3 M41.7,107.7 V115.3 M29,117.5 H39.3" stroke="#f4f4f4" stroke-width="1.3" fill="none"/>
<g fill="#111" stroke="#f4f4f4" stroke-width="1.2"><rect x="24.4" y="102.2" width="4.5" height="4.5"/><rect x="24.4" y="115.3" width="4.5" height="4.5"/><rect x="39.4" y="115.3" width="4.5" height="4.5"/></g>
<path d="M30,114.8 L31.2,110.8 L40.3,102.6 A1.9,1.9 0 0 1 43.4,105.2 L34.2,113.6 Z" fill="#17c9a0" stroke="#0b2a22" stroke-width="0.7"/>
<path d="M39.6,103.4 L42.4,106.1" stroke="#0b2a22" stroke-width="0.8"/>
<path d="M58.8,106.8 L69,100.8 L78.7,106.5 V115.6 L69,121 L58.8,115.6 Z" fill="#bdbdbd"/>
<path d="M58.8,106.8 L69,100.8 L78.7,106.5 L69,112 Z" fill="#fafafa"/>
<path d="M58.8,106.8 L69,112 V121 L58.8,115.6 Z" fill="#e0e0e0"/>
<circle cx="78.4" cy="106.2" r="5.2" fill="#262628"/>
<path d="M78.4,101.8 V110.6 M74,106.2 H82.8" stroke="#17dcaa" stroke-width="1.3"/>
<g fill="#17dcaa"><circle cx="76.2" cy="104" r="0.8"/><circle cx="80.6" cy="104" r="0.8"/><circle cx="76.2" cy="108.4" r="0.8"/><circle cx="80.6" cy="108.4" r="0.8"/></g>
<rect x="95.9" y="101.9" width="18.2" height="18.2" fill="#ececec"/>
<g fill="none" stroke="#0c0c0c" stroke-width="1.25" stroke-linecap="round" stroke-linejoin="round"><path d="M104.2,103.9 H97.9 V108.2 M100.6,107.9 H104.2 V106.8"/><path d="M112.4,103.9 H106.8 V108.2 M112,106.8 V110.9 H106.4"/><path d="M103.2,110.8 H97.9 V115 M103,113.5 V118 H97.5"/><path d="M109.2,114 H105.5 V115.2 M112,113.5 V118 H105.5"/></g>
<path d="M130.7,120.5 L137.6,101.6 H144 L151.3,120.5 H145.6 L144.3,116.2 H137.5 L136.3,120.5 Z M138.9,114.1 L141.4,108.9 L144,114.1 Z" fill="#d8d8d8" fill-rule="evenodd"/>
<rect x="166.1" y="104.2" width="21.8" height="15.4" rx="1.8" fill="#d6d6d6"/>
<rect x="166.1" y="101.9" width="9.8" height="3.2" rx="1.6" fill="#17dcaa"/>
<path d="M177.1,107.9 V116 M173,111.9 H181.2" stroke="#1a1a1a" stroke-width="1.8"/>
<path d="M349,109.5 H357.8 L353.4,114.2 Z" fill="#f0f0f0"/>
<rect x="32" y="145" width="13" height="13" rx="2.5" fill="#1fa88a"/>
<path d="M35,151.5 L37.6,154 L42,149.2" fill="none" stroke="#f4f4f4" stroke-width="1.7"/>
<path d="M49.8,147.8 Q49.8,146.3 51.3,146.3 H54.8 Q55.8,146.3 56.3,147.5 H61.9 V157.3 H49.8 Z" fill="#c8c8c8"/>
<rect x="49.8" y="148.6" width="13" height="8.7" fill="#fcdf8a"/>
<rect x="43" y="167" width="13" height="13" rx="2.5" fill="#1fa88a"/>
<path d="M46,173.5 L48.6,176 L53,171.2" fill="none" stroke="#f4f4f4" stroke-width="1.7"/>
<path d="M60.5,169.8 Q60.5,168.3 62,168.3 H65.5 Q66.5,168.3 67,169.5 H72.6 V179.3 H60.5 Z" fill="#c8c8c8"/>
<rect x="60.5" y="170.6" width="13" height="8.7" fill="#fcdf8a"/>
<rect x="54.3" y="189" width="13" height="13" rx="2.5" fill="#1fa88a"/>
<path d="M57.3,195.5 L59.9,198 L64.3,193.2" fill="none" stroke="#f4f4f4" stroke-width="1.7"/>
<rect x="43" y="211" width="13" height="13" rx="2.5" fill="#1fa88a"/>
<path d="M46,217.5 L48.6,220 L53,215.2" fill="none" stroke="#f4f4f4" stroke-width="1.7"/>
<path d="M60.5,213.8 Q60.5,212.3 62,212.3 H65.5 Q66.5,212.3 67,213.5 H72.6 V223.3 H60.5 Z" fill="#c8c8c8"/>
<rect x="60.5" y="214.6" width="13" height="8.7" fill="#fcdf8a"/>
<rect x="43" y="233" width="13" height="13" rx="2.5" fill="#1fa88a"/>
<path d="M46,239.5 L48.6,242 L53,237.2" fill="none" stroke="#f4f4f4" stroke-width="1.7"/>
<path d="M60.5,235.8 Q60.5,234.3 62,234.3 H65.5 Q66.5,234.3 67,235.5 H72.6 V245.3 H60.5 Z" fill="#c8c8c8"/>
<rect x="60.5" y="236.6" width="13" height="8.7" fill="#fcdf8a"/>
<rect x="43" y="255" width="13" height="13" rx="2.5" fill="#1fa88a"/>
<path d="M46,261.5 L48.6,264 L53,259.2" fill="none" stroke="#f4f4f4" stroke-width="1.7"/>
<path d="M60.5,257.8 Q60.5,256.3 62,256.3 H65.5 Q66.5,256.3 67,257.5 H72.6 V267.3 H60.5 Z" fill="#c8c8c8"/>
<rect x="60.5" y="258.6" width="13" height="8.7" fill="#fcdf8a"/>
<path d="M27.5,171 L32.2,175.8 L37,171" fill="none" stroke="#bdbdbd" stroke-width="1.3"/>
<path d="M73,188.5 H79.8 L84,192.7 V203.2 H73 Z" fill="#6ea896"/>
<path d="M79.8,188.5 V192.7 H84 Z" fill="#b4d8c8"/>
<text x="71" y="202.6" font-family="Liberation Sans" font-size="7.8" font-weight="700" fill="#f0f0f0" stroke="#000" stroke-width="1.6" paint-order="stroke" textLength="14.2" lengthAdjust="spacingAndGlyphs">IGS</text>
<path d="M114.94,452.52 L114.94,455.48 L112.89,455.78 L112.71,456.20 L113.95,457.87 L111.87,459.95 L110.20,458.71 L109.78,458.89 L109.48,460.94 L106.52,460.94 L106.22,458.89 L105.80,458.71 L104.13,459.95 L102.05,457.87 L103.29,456.20 L103.11,455.78 L101.06,455.48 L101.06,452.52 L103.11,452.22 L103.29,451.80 L102.05,450.13 L104.13,448.05 L105.80,449.29 L106.22,449.11 L106.52,447.06 L109.48,447.06 L109.78,449.11 L110.20,449.29 L111.87,448.05 L113.95,450.13 L112.71,451.80 L112.89,452.22Z" fill="#e6e6e6"/><circle cx="108" cy="454" r="2.4" fill="#262628"/>
<path d="M139,447.5 C141,451 144.2,453.5 144.2,456 A5.2,5.2 0 0 1 133.8,456 C133.8,453.5 137,451 139,447.5 Z" fill="#e6e6e6"/>
<path d="M136.5,456 A2.6,2.6 0 0 0 139,458.6" stroke="#262628" stroke-width="1.1" fill="none"/>
<path d="M161,454.7 Q170,444.5 179,454.7 Q170,464.9 161,454.7 Z" fill="#e6e6e6"/>
<circle cx="170" cy="454.7" r="3.6" fill="#262628"/><circle cx="170" cy="454.7" r="2" fill="#e6e6e6"/>
<path d="M170,452.8 V454.7 H171.6" stroke="#262628" stroke-width="0.9" fill="none"/>
<path d="M196,449.8 L206,459.2 M206,449.8 L196,459.2" stroke="#e6e6e6" stroke-width="1.3"/>
<path d="M35.4,473.7 L41.8,478.5 L35.0,488.2 L28.7,482.2 Z" fill="#1d6252" stroke="#22937a" stroke-width="0.8"/>
<path d="M35.4,490.7 L41.8,495.5 L35.0,505.2 L28.7,499.2 Z" fill="#1d6252" stroke="#22937a" stroke-width="0.8"/>
<path d="M35.4,507.7 L41.8,512.5 L35.0,522.2 L28.7,516.2 Z" fill="#1d6252" stroke="#22937a" stroke-width="0.8"/>
<path d="M35.4,524.6999999999999 L41.8,529.5 L35.0,539.1999999999999 L28.7,533.1999999999999 Z" fill="#1d6252" stroke="#22937a" stroke-width="0.8"/>
<path d="M35.4,541.6999999999999 L41.8,546.5 L35.0,556.1999999999999 L28.7,550.1999999999999 Z" fill="#1d6252" stroke="#22937a" stroke-width="0.8"/>
<path d="M35.4,558.6999999999999 L41.8,563.5 L35.0,573.1999999999999 L28.7,567.1999999999999 Z" fill="#1d6252" stroke="#22937a" stroke-width="0.8"/>
<path d="M35.4,575.6999999999999 L41.8,580.5 L35.0,590.1999999999999 L28.7,584.1999999999999 Z" fill="#1d6252" stroke="#22937a" stroke-width="0.8"/>
<path d="M35.4,592.6999999999999 L41.8,597.5 L35.0,607.1999999999999 L28.7,601.1999999999999 Z" fill="#1d6252" stroke="#22937a" stroke-width="0.8"/>
<path d="M35.4,609.6999999999999 L41.8,614.5 L35.0,624.1999999999999 L28.7,618.1999999999999 Z" fill="#1d6252" stroke="#22937a" stroke-width="0.8"/>
<path d="M35.4,626.6999999999999 L41.8,631.5 L35.0,641.1999999999999 L28.7,635.1999999999999 Z" fill="#1d6252" stroke="#22937a" stroke-width="0.8"/>
<path d="M35.4,643.6999999999999 L41.8,648.5 L35.0,658.1999999999999 L28.7,652.1999999999999 Z" fill="#1d6252" stroke="#22937a" stroke-width="0.8"/>
<path d="M35.4,660.6999999999999 L41.8,665.5 L35.0,675.1999999999999 L28.7,669.1999999999999 Z" fill="#1d6252" stroke="#22937a" stroke-width="0.8"/>
<path d="M35.4,677.6999999999999 L41.8,682.5 L35.0,692.1999999999999 L28.7,686.1999999999999 Z" fill="#1d6252" stroke="#22937a" stroke-width="0.8"/>
<path d="M35.4,694.6999999999999 L41.8,699.5 L35.0,709.1999999999999 L28.7,703.1999999999999 Z" fill="#1d6252" stroke="#22937a" stroke-width="0.8"/>
<path d="M35.4,711.6999999999999 L41.8,716.5 L35.0,726.1999999999999 L28.7,720.1999999999999 Z" fill="#1d6252" stroke="#22937a" stroke-width="0.8"/>
<path d="M235.29999999999998,473.7 L241.7,478.5 L234.89999999999998,488.2 L228.6,482.2 Z" fill="#1d6252" stroke="#22937a" stroke-width="0.8"/>
<path d="M235.29999999999998,490.7 L241.7,495.5 L234.89999999999998,505.2 L228.6,499.2 Z" fill="#1d6252" stroke="#22937a" stroke-width="0.8"/>
<path d="M235.29999999999998,507.7 L241.7,512.5 L234.89999999999998,522.2 L228.6,516.2 Z" fill="#1d6252" stroke="#22937a" stroke-width="0.8"/>
<path d="M235.29999999999998,524.6999999999999 L241.7,529.5 L234.89999999999998,539.1999999999999 L228.6,533.1999999999999 Z" fill="#1d6252" stroke="#22937a" stroke-width="0.8"/>
<path d="M235.29999999999998,541.6999999999999 L241.7,546.5 L234.89999999999998,556.1999999999999 L228.6,550.1999999999999 Z" fill="#1d6252" stroke="#22937a" stroke-width="0.8"/>
<path d="M235.29999999999998,558.6999999999999 L241.7,563.5 L234.89999999999998,573.1999999999999 L228.6,567.1999999999999 Z" fill="#1d6252" stroke="#22937a" stroke-width="0.8"/>
<path d="M235.29999999999998,575.6999999999999 L241.7,580.5 L234.89999999999998,590.1999999999999 L228.6,584.1999999999999 Z" fill="#1d6252" stroke="#22937a" stroke-width="0.8"/>
<path d="M235.29999999999998,592.6999999999999 L241.7,597.5 L234.89999999999998,607.1999999999999 L228.6,601.1999999999999 Z" fill="#1d6252" stroke="#22937a" stroke-width="0.8"/>
<path d="M235.29999999999998,609.6999999999999 L241.7,614.5 L234.89999999999998,624.1999999999999 L228.6,618.1999999999999 Z" fill="#1d6252" stroke="#22937a" stroke-width="0.8"/>
<path d="M235.29999999999998,626.6999999999999 L241.7,631.5 L234.89999999999998,641.1999999999999 L228.6,635.1999999999999 Z" fill="#1d6252" stroke="#22937a" stroke-width="0.8"/>
<path d="M235.29999999999998,643.6999999999999 L241.7,648.5 L234.89999999999998,658.1999999999999 L228.6,652.1999999999999 Z" fill="#1d6252" stroke="#22937a" stroke-width="0.8"/>
<path d="M235.29999999999998,660.6999999999999 L241.7,665.5 L234.89999999999998,675.1999999999999 L228.6,669.1999999999999 Z" fill="#1d6252" stroke="#22937a" stroke-width="0.8"/>
<path d="M235.29999999999998,677.6999999999999 L241.7,682.5 L234.89999999999998,692.1999999999999 L228.6,686.1999999999999 Z" fill="#1d6252" stroke="#22937a" stroke-width="0.8"/>
<path d="M235.29999999999998,694.6999999999999 L241.7,699.5 L234.89999999999998,709.1999999999999 L228.6,703.1999999999999 Z" fill="#1d6252" stroke="#22937a" stroke-width="0.8"/>
<path d="M235.29999999999998,711.6999999999999 L241.7,716.5 L234.89999999999998,726.1999999999999 L228.6,720.1999999999999 Z" fill="#1d6252" stroke="#22937a" stroke-width="0.8"/>
<path d="M37.4,741.4 L33.4,745.3 L37.4,749.2" fill="none" stroke="#8c8c8c" stroke-width="2.1"/>
<path d="M345.6,741.4 L349.6,745.3 L345.6,749.2" fill="none" stroke="#8c8c8c" stroke-width="2.1"/>
<rect x="142" y="737" width="196" height="1" fill="#050505"/>
<path d="M393.5,70.3 L398,64.9 L402.5,70.3 Z" fill="#ececec"/>
<circle cx="398" cy="102" r="14.8" fill="none" stroke="#16a585" stroke-width="1.3"/>
<circle cx="398" cy="453" r="14.8" fill="none" stroke="#16a585" stroke-width="1.3"/>
<circle cx="398" cy="487" r="14.8" fill="none" stroke="#16a585" stroke-width="1.3"/>
<circle cx="398" cy="521" r="14.8" fill="none" stroke="#16a585" stroke-width="1.3"/>
<circle cx="398" cy="589" r="14.8" fill="none" stroke="#16a585" stroke-width="1.3"/>
<g fill="none" stroke="#9c9c9c" stroke-width="1"><rect x="394" y="94.5" width="8" height="2"/><rect x="393.5" y="96.5" width="9" height="6"/><rect x="391.5" y="102.5" width="13" height="4.5"/><rect x="393.5" y="107" width="9" height="2.5"/></g>
<g stroke="#0a0a0a" stroke-width="0.8"><rect x="394" y="128.8" width="8" height="2" fill="#eeeeee"/><rect x="393.5" y="130.8" width="9" height="5.5" fill="#eeeeee"/><rect x="391.7" y="136.3" width="12.8" height="4.8" fill="#eeeeee"/><rect x="394" y="141.3" width="8" height="2" fill="#eeeeee"/></g>
<g stroke="#0a0a0a" stroke-width="0.8"><rect x="394" y="162.5" width="8" height="1.5" fill="#17dcaa"/><rect x="393.5" y="164.5" width="9" height="5.8" fill="#17dcaa"/><rect x="391.7" y="170.5" width="12.8" height="4.8" fill="#eeeeee"/><rect x="394" y="175.8" width="8" height="1.8" fill="#eeeeee"/></g>
<rect x="392" y="198.3" width="12.3" height="12.5" fill="#e8e8e8"/>
<g stroke="#0a0a0a" stroke-width="0.8"><rect x="394" y="230.6" width="8" height="2" fill="#17dcaa"/><rect x="393.5" y="232.6" width="9" height="5.5" fill="#17dcaa"/><rect x="391.7" y="238.1" width="12.8" height="4.8" fill="#17dcaa"/><rect x="394" y="243.1" width="8" height="2" fill="#17dcaa"/></g>
<g stroke="#0a0a0a" stroke-width="0.8"><rect x="394.3" y="264.5" width="7.6" height="3.6" fill="#eeeeee"/><rect x="392.6" y="268.3" width="10.8" height="4.2" fill="#eeeeee"/></g>
<path d="M394.5,273 H401.5 L398.7,279.6 H397.3 Z" fill="#f6c41c" stroke="#0a0a0a" stroke-width="0.6"/>
<g stroke="#0a0a0a" stroke-width="0.8"><rect x="395.2" y="297" width="5.8" height="2.4" fill="#eeeeee"/><rect x="395.2" y="299.6" width="5.8" height="2.4" fill="#eeeeee"/></g>
<rect x="395.8" y="302.5" width="4.6" height="10" fill="#f6c41c"/>
<path d="M395.8,306 L400.4,303.5 M395.8,309.5 L400.4,307 M395.8,312.5 L400.4,310.5" stroke="#111" stroke-width="0.9"/>
<path d="M390.8,347.2 V339.5 Q390.8,336 395.4,335.2 V347.2 Z" fill="#f5c419"/>
<path d="M401,335.2 Q405.2,336 405.2,339.5 V347.2 H401 Z" fill="#eeeeee"/>
<circle cx="397.8" cy="336" r="2" fill="#dcdcdc"/>
<rect x="395.8" y="341.6" width="4.4" height="3" fill="#eeeeee"/>
<rect x="395.8" y="345.4" width="4.4" height="1.8" fill="#eeeeee"/>
<path d="M392,367 H403 Q404.6,367 404.6,368.6 V379.4 Q404.6,381 403,381 H393.6 Q392,381 392,379.4 V375.4 H399.6 V369.6 H392 Z" fill="#ececec" stroke="#0a0a0a" stroke-width="0.8"/>
<path d="M392.6,379.6 H404 V381 H392.6 Z" fill="#a8a8a8"/>
<path d="M394.6,370.6 V374.2" stroke="#ececec" stroke-width="1.1"/>
<path d="M392.6,405.4 L394.6,402.6 M392.6,410.8 L399.2,402.2 M396.6,413.6 L403.6,404.2 M402.4,413.2 L404.2,410.6" fill="none" stroke="#dcdcdc" stroke-width="3.6" stroke-linecap="round"/>
<path d="M392.6,405.4 L394.6,402.6 M392.6,410.8 L399.2,402.2 M396.6,413.6 L403.6,404.2 M402.4,413.2 L404.2,410.6" fill="none" stroke="#2f2f31" stroke-width="1.3" stroke-linecap="round"/>
<defs><linearGradient id="gSep" x1="0" x2="1"><stop offset="0" stop-color="#555" stop-opacity="0"/><stop offset="0.5" stop-color="#6a6a6a"/><stop offset="1" stop-color="#555" stop-opacity="0"/></linearGradient></defs>
<rect x="381" y="430" width="34" height="1.2" fill="url(#gSep)"/>
<circle cx="398" cy="452.8" r="4.1" fill="#17dcaa"/>
<path d="M389.9,492.3 V484.2 A3.9,3.9 0 0 1 397.7,484.2 V489.8 A3.9,3.9 0 0 0 405.5,489.8 V481" fill="none" stroke="#e2e2e2" stroke-width="1.3"/>
<path d="M391,515.6 Q398,511.8 405.6,515.6 V525.2 Q398,521.6 391,525.2 Z" fill="url(#gTealH)"/>
<path d="M390.8,549.2 Q398,546.3 405.6,549.2 V561.4 Q398,557.2 390.8,561.4 Z" fill="url(#gGrayH)" stroke="#17dcaa" stroke-width="1.3"/>
<g fill="none" stroke="#17dcaa" stroke-width="1.3"><path d="M390.8,583.2 Q398,580.3 405.6,583.2 V595.4 Q398,591.2 390.8,595.4 Z"/><path d="M398,581.3 V592.6 M390.8,589 Q398,586.2 405.6,589"/></g>
<path d="M390.8,617.6 Q398,615 405.6,617.6 V629.6 Q398,625.8 390.8,629.6 Z" fill="url(#gGrayH)"/>
<circle cx="404.4" cy="628.7" r="2" fill="#17dcaa"/>
<g fill="none" stroke="#17dcaa" stroke-width="2.2"><path d="M434.5,536.5 V532.8 H438.2 M445.8,532.8 H449.5 V536.5 M449.5,543.5 V547.2 H445.8 M438.2,547.2 H434.5 V543.5"/></g>
<rect x="437.6" y="535.4" width="8.8" height="9" fill="#f6f6f6"/>
<circle cx="441.7" cy="578.1" r="8.4" fill="url(#gSphere)" stroke="#222" stroke-width="0.6"/>
<path d="M433.5,578.6 Q441.7,576 450,578.6 M441.7,569.8 Q440.6,578 441.7,586.4" fill="none" stroke="#1a1a1a" stroke-width="1"/>
<defs><linearGradient id="gCylV" x1="0" y1="0" x2="0" y2="1"><stop offset="0" stop-color="#8a8a8a"/><stop offset="0.45" stop-color="#f0f0f0"/><stop offset="1" stop-color="#7a7a7a"/></linearGradient></defs>
<path d="M437,607.2 H442 V624.8 H437 A3.6,8.8 0 0 1 437,607.2 Z" fill="url(#gCylV)"/>
<ellipse cx="443.6" cy="615.9" rx="3.7" ry="9.3" fill="#fafafa"/>
<ellipse cx="444.4" cy="616" rx="2.4" ry="6.6" fill="#4a4a4a"/>
<rect x="443" y="611.8" width="5" height="8.5" fill="url(#gCylV)"/>
<ellipse cx="449.1" cy="616" rx="2" ry="5.2" fill="#fafafa"/>
<path d="M553.6,65.2 H547.7 A8,8.15 0 0 0 547.7,81.5 H553.6 V77.6 H550.5 A4.1,4.4 0 0 1 550.5,68.8 H553.6 Z" fill="#e6e6e6" stroke="#0a0a0a" stroke-width="0.9"/>
<path d="M550.6,65.4 V68.8 M550.6,77.6 V81.3" stroke="#0a0a0a" stroke-width="0.8"/>
<path d="M551,65.6 H553.2 V68.4 H551 Z M551,78 H553.2 V81.1 H551 Z" fill="#ffffff"/>
<path d="M557.5,65 V69.5 M557.5,77.3 V82" stroke="#e6e6e6" stroke-width="1"/>
<circle cx="557.5" cy="73.3" r="3.1" fill="#17dcaa" stroke="#0a0a0a" stroke-width="0.6"/>
<path d="M581.8,81.8 V73.5 A8.4,8.6 0 1 1 597,78.6 H605 V81.8 Z" fill="#f0f0f0" stroke="#0a0a0a" stroke-width="0.8"/>
<path d="M582.3,81.4 V76.3 L587.4,81.4 Z" fill="#bdbdbd"/>
<path d="M597.2,78.8 H604.8 V81.6 H597.2 Z" fill="#cfcfcf"/>
<circle cx="590.2" cy="73" r="4.6" fill="#f0f0f0" stroke="#2a2a2a" stroke-width="0.9"/><circle cx="590.2" cy="73" r="3.2" fill="#17dcaa"/>
<circle cx="596.6" cy="79.8" r="1.5" fill="#17dcaa"/>
<path d="M595,64.6 L597.8,67.2" stroke="#c8c8c8" stroke-width="1"/>
<path d="M627.2,62.8 H643 Q646.2,62.8 646.2,65.6 H637.2 V84 H632 V77 H627.2 V74.5 H632 V65.6 H627.2 Z" fill="#e4e4e4" stroke="#0a0a0a" stroke-width="0.7"/>
<path d="M637.2,74.5 H643 Q645,74.5 645,76 H637.2 Z" fill="#d4d4d4" stroke="#0a0a0a" stroke-width="0.6"/>
<path d="M634,67.5 H636.2 M634,69.5 H636.2 M634,71.5 H636.2 M632.8,79 V83.5" stroke="#2a2a2a" stroke-width="0.7"/>
<rect x="632.4" y="65.8" width="1.2" height="18" fill="#9a9a9a"/>
<circle cx="644.4" cy="69.4" r="2.9" fill="#17dcaa" stroke="#0a0a0a" stroke-width="0.6"/>
<rect x="659" y="60" width="1.1" height="26" fill="#58585a"/>
<g fill="#17dcaa"><path d="M681,61.2 L684.4,65.9 H677.6 Z"/><path d="M681,84.8 L684.4,80.1 H677.6 Z"/><path d="M669.2,73 L673.9,69.6 V76.4 Z"/><path d="M692.8,73 L688.1,69.6 V76.4 Z"/></g>
<path d="M681,65.5 V69 M681,77 V80.5 M673.5,73 H677 M685,73 H688.5" stroke="#17dcaa" stroke-width="2.3"/>
<circle cx="681" cy="73" r="2.6" fill="#f6f6f6" stroke="#0a0a0a" stroke-width="0.9"/>
<path d="M719,61.5 L729,61.5 L735.5,68.5 L735,78.5 L728,84.5 L719,84.5 L712.5,78 L712.5,68.5 Z" fill="#dcdcdc" stroke="#111" stroke-width="0.9"/>
<path d="M723.8,61.5 L718.8,67.8 L712.5,68.5 M723.8,61.5 L727.1,68.9 L729,61.5 M727.1,68.9 L735.5,68.5 M727.1,68.9 L719.7,76.6 L718.8,67.8 M727.1,68.9 L730,78.8 L735,78.5 M719.7,76.6 L730,78.8 L728,84.5 M719.7,76.6 L712.5,78 M719.7,76.6 L723.5,84.5 L730,78.8" fill="none" stroke="#111" stroke-width="0.8"/>
<path d="M718.8,67.8 L727.1,68.9 L719.7,76.6 Z" fill="#17dcaa" stroke="#111" stroke-width="0.8"/>
<path d="M767,60.8 L777,79 H757 Z" fill="#d8d8d8"/>
<path d="M761.4,68.8 H772.6 L779.6,78.9 H755 Z" fill="#3a3a3a" fill-opacity="0.55" stroke="#d0d0d0" stroke-width="0.8"/>
<path d="M763.5,69.3 H770.5 L774.5,78.6 H759.5 Z" fill="#d8d8d8" fill-opacity="0.6"/>
<ellipse cx="766.8" cy="74.1" rx="7.5" ry="3.2" fill="#17dcaa" stroke="#111" stroke-width="0.6"/>
<path d="M756.6,79.6 H776.9 Q775.5,84.8 766.8,84.8 Q758,84.8 756.6,79.6 Z" fill="#f8f8f8" stroke="#111" stroke-width="0.5"/>
<path d="M803.3,65 V70.3 A6.6,2.6 0 0 0 816.6,70.3 V65 Z" fill="#d4d4d4"/>
<ellipse cx="810" cy="65" rx="6.6" ry="2.4" fill="#f6f6f6"/>
<path d="M800.5,75 H819.6 L822.3,85.5 H797.5 Z" fill="#d6d6d6" stroke="#111" stroke-width="0.5"/>
<ellipse cx="810" cy="80" rx="7" ry="2.8" fill="#17dcaa"/>
<path d="M841.5,65 L847.5,62 L853,65 L864,61.8 V81.5 L858.5,84 L853,81.5 L841.5,84.3 Z" fill="#d6d6d6" stroke="#111" stroke-width="0.6"/>
<path d="M847.5,62 V81.5 M853,65 V81.5 M858.5,64 V84 M841.5,74 L864,71" stroke="#444" stroke-width="0.7" fill="none"/>
<path d="M847.5,62 L853,65 V81.5 L847.5,81.5 Z" fill="#f2f2f2"/>
<circle cx="853.3" cy="72.3" r="2.4" fill="#17dcaa" stroke="#111" stroke-width="0.5"/>
<path d="M884.5,71 L895,63 L907.3,67.3 V76.5 L896.5,83.3 L884.5,77.5 Z" fill="#cfcfcf" stroke="#111" stroke-width="0.5"/>
<path d="M884.5,71 L895,63 L907.3,67.3 L896.5,74 Z" fill="#f6f6f6"/>
<path d="M884.5,71 L896.5,74 V83.3 L884.5,77.5 Z" fill="#ececec"/>
<path d="M887.3,75 V71.5 L889,71 M890.5,76 V72.5 L892.3,72 M893.8,77 V73.5 L895.5,73" fill="none" stroke="#159a86" stroke-width="1.3"/>
<ellipse cx="939" cy="65.8" rx="5.8" ry="2.4" fill="#17dcaa"/>
<path d="M929.5,74.5 H948.5 L951.3,85.5 H926.8 Z" fill="#d8d8d8"/>
<ellipse cx="939" cy="80" rx="7.3" ry="3.1" fill="#2f2f31"/>
<path d="M972.8,63.8 H987.5 A4,4 0 0 1 987.5,71.8 H981" fill="none" stroke="#f2f2f2" stroke-width="1.5"/>
<path d="M979,72 H976 A4.6,4.6 0 0 0 976,81.5 H984" fill="none" stroke="#17dcaa" stroke-width="1.5"/>
<path d="M981.5,68.5 L982.5,71 L985,70 L983.8,72.4 L986,74 L983.3,74.2 L983.5,77 L981.5,75.2 L979.5,77 L979.7,74.2 L977,74 L979.2,72.4 L978,70 L980.5,71 Z" fill="#17dcaa"/>
<path d="M990.5,78.6 V86.4 M986.6,82.5 H994.4" stroke="#f2f2f2" stroke-width="1.4"/>
<path d="M441.4,648.1 L477.8,669.2 L441.2,689.2 L405.5,669 Z" fill="#323234" stroke="#1e1e1e" stroke-width="0.8"/>
<path d="M405.5,669 L441.2,689.2 L441.4,731.5 L405.5,710.6 Z" fill="#303032" stroke="#1e1e1e" stroke-width="0.8"/>
<path d="M441.2,689.2 L477.8,669.2 L477.8,710.6 L441.4,731.5 Z" fill="#2e2e30" stroke="#1e1e1e" stroke-width="0.8"/>
<rect x="440.6" y="641" width="1.8" height="6.5" fill="#2a44d0"/>
<path d="M399.6,713.6 L404.8,710.6" stroke="#d01458" stroke-width="1.6"/>
<path d="M478.3,710.6 L484,713.6" stroke="#18a070" stroke-width="1.6"/>
<text x="386.3" y="723.8" font-family="Liberation Sans" font-size="12.5" fill="#d01458">X</text>
<text x="488.3" y="723.8" font-family="Liberation Sans" font-size="12.5" fill="#18b070">Y</text>
<g font-family="Liberation Sans" font-size="10.5" fill="#e8e8e8"><text transform="matrix(-0.866,0.5,-0.866,-0.5,445.5,664.5)" >Top</text><text transform="matrix(0.866,0.5,0,1,413.5,696.5)">Right</text><text transform="matrix(0.866,-0.5,0,1,449.5,708.5)">Back</text></g>
<path d="M514,738 V750 M508,744 H520" stroke="#a0a0a0" stroke-width="1.5"/>
<path d="M545.6,742.2 L550.1,746.8 L554.6,742.2" fill="none" stroke="#8a8a8a" stroke-width="1.3"/>
<path d="M586,741.6 L590.3,744.1 V749 L586,751.4 L581.7,749 V744.1 Z" fill="#0b5c44" stroke="#1fb48c" stroke-width="1.4"/>
<path d="M586,739 V746.5 M586,746.5 Q582,747.2 579,750.4 M586,746.5 Q590,747.2 593,750.4" fill="none" stroke="#d0d0d0" stroke-width="1"/>
<path d="M584.2,739.2 L586,736.8 L587.8,739.2 Z M578,748.6 L578.3,751.2 L580.6,750.6 Z M594,748.6 L593.7,751.2 L591.4,750.6 Z" fill="#c8c8c8"/>
<path d="M1071.8,747.6 V742 A5.3,5.9 0 0 1 1082.4,742 V747.6 L1083.6,748.9 H1070.6 Z" fill="none" stroke="#a4a4a4" stroke-width="1.2" stroke-linejoin="round"/>
<rect x="1074" y="751" width="6" height="1.1" fill="#b0b0b0"/>
<rect x="1142.5" y="730.5" width="9.3" height="28" rx="1.5" fill="#1c8e8a"/>
<rect x="1144.3" y="732.3" width="5.6" height="12.5" fill="#1a2826"/>
<rect x="1144.3" y="745.5" width="5.6" height="11.5" fill="#1f8a88"/>
<path d="M297,149.5 H475" stroke="#ffffff" stroke-width="2"/>
<path d="M288,149.5 L298.5,144.7 V154.3 Z" fill="#ffffff"/>
<path d="M297,197.3 H475" stroke="#ffffff" stroke-width="2"/>
<path d="M288,197.3 L298.5,192.5 V202.10000000000002 Z" fill="#ffffff"/>
<path d="M301,483 H475" stroke="#ffffff" stroke-width="2"/>
<path d="M292,483 L302.5,478.2 V487.8 Z" fill="#ffffff"/>
<path d="M221,521.4 H475" stroke="#ffffff" stroke-width="2"/>
<path d="M212,521.4 L222.5,516.6 V526.1999999999999 Z" fill="#ffffff"/>
</svg>
</body></html>
